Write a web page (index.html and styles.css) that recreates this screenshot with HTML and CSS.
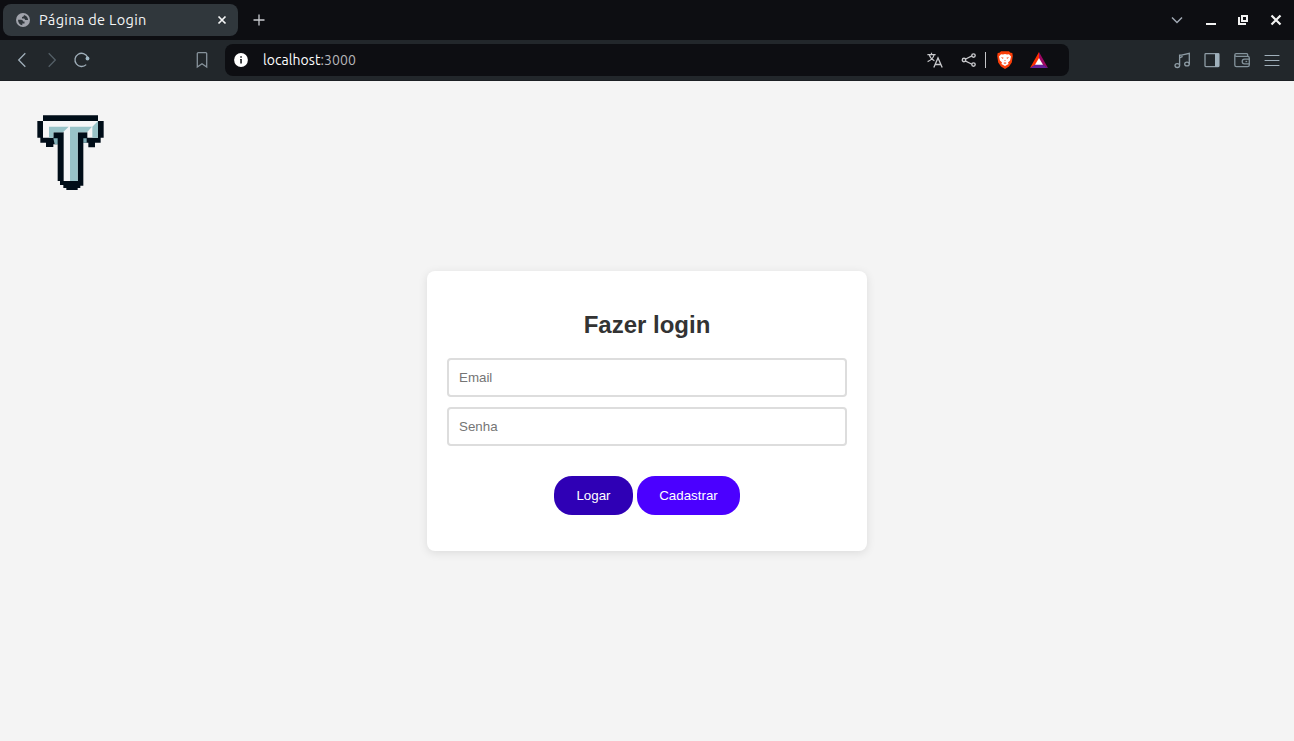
FILE: index.html
```html
<!DOCTYPE html>
<html lang="pt-BR">
<head>
<meta charset="utf-8">
<title>Página de Login</title>
<link rel="stylesheet" href="styles.css">
</head>
<body>
<header class="browser">
  <div class="tabbar">
    <div class="tab">
      <svg class="globe" width="14" height="14" viewBox="0 0 14 14"><circle cx="7" cy="7" r="7" fill="#a0a3ab"/><path d="M2 6.8h3.1c1.3 0 1.9.7 1.9 1.7h1.5v2H6.3v1.8C3.8 12 2 9.8 2 6.8zM8 2c-.1 1.4-.8 1.7-2 1.9v1.6h1.7c.8 0 1.1.7 1.5 1.6h2.9c-.1-2.6-1.7-4.6-4.1-5.1z" fill="#30373c"/></svg>
      <span class="tab-title">Página de Login</span>
      <svg class="tab-close" width="10" height="10" viewBox="0 0 10 10"><path d="M1.5 1.5l7 7M8.5 1.5l-7 7" stroke="#f4f5f6" stroke-width="1.7"/></svg>
    </div>
    <svg class="new-tab" width="12" height="12" viewBox="0 0 12 12"><path d="M6 .5v11M.5 6h11" stroke="#c9cbd0" stroke-width="1.3"/></svg>
    <div class="window-controls">
      <svg width="32" height="20" viewBox="0 0 32 20"><path d="M11 7.5l5 5 5-5" fill="none" stroke="#a0a8b3" stroke-width="1.5"/></svg>
      <svg width="34" height="20" viewBox="0 0 34 20"><path d="M13 13h10v2H13z" fill="#f2f2f2"/></svg>
      <svg width="32" height="20" viewBox="0 0 32 20"><path d="M14 5h7v7h-7zM16 7v3h3V7zM11 7h2v6h6v2h-8z" fill="#f2f2f2" fill-rule="evenodd"/></svg>
      <svg width="32" height="20" viewBox="0 0 32 20"><path d="M12.5 5.5l9 9M21.5 5.5l-9 9" stroke="#f2f2f2" stroke-width="2.2"/></svg>
    </div>
  </div>
  <div class="toolbar">
    <div class="icons">
      <svg width="30" height="20" viewBox="0 0 30 20"><path d="M18.3 3.3L11.7 10l6.6 6.7" fill="none" stroke="#a0afba" stroke-width="1.3"/></svg>
      <svg width="30" height="20" viewBox="0 0 30 20"><path d="M11.7 3.3l6.6 6.7-6.6 6.7" fill="none" stroke="#545f67" stroke-width="1.3"/></svg>
      <svg width="30" height="20" viewBox="0 0 30 20"><path d="M20.6 7.2A6.6 6.6 0 1 0 19.2 14.6" fill="none" stroke="#a0afba" stroke-width="1.3"/><circle cx="20.5" cy="8.5" r="1.9" fill="#a0b7c4"/></svg>
    </div>
    <svg class="bookmark" width="30" height="20" viewBox="0 0 30 20"><path d="M11.3 2.6h7.4q1 0 1 1v13.5L15 13.8l-4.7 3.3V3.6q0-1 1-1z" fill="none" stroke="#87929b" stroke-width="1.3"/></svg>
    <div class="omnibox">
      <svg class="info" width="14" height="14" viewBox="0 0 14 14"><circle cx="7" cy="7" r="6.9" fill="#fff"/><path d="M6.2 3.3h1.7v1.5H6.2zM6 6h1.9v4.6H6.2V7H6z" fill="#24272a"/></svg>
      <span class="url">localhost<span class="port">:3000</span></span>
      <div class="omni-actions">
        <svg width="18" height="20" viewBox="0 0 18 20"><path d="M1.4 4.6h8.2M5.5 2.7v1.9M3.2 4.7c.8 2.8 2.6 4.8 5.2 6.1M8.2 4.7C7.3 8 5 10.4 1.6 11.6" fill="none" stroke="#c8c9cc" stroke-width="1.2"/><path d="M7.8 17.5L12 7.9l4.2 9.6M9.2 14.5h5.6" fill="none" stroke="#c8c9cc" stroke-width="1.3"/></svg>
        <svg class="share" width="16" height="20" viewBox="0 0 16 20"><path d="M4.2 9.2l6.7-3.3M4.2 10.9l6.7 3.3" stroke="#c8c9cc" stroke-width="1.2"/><g fill="none" stroke="#c8c9cc" stroke-width="1.4"><circle cx="3" cy="10" r="1.7"/><circle cx="12.5" cy="5.6" r="1.7"/><circle cx="12.5" cy="14.6" r="1.7"/></g></svg>
        <i class="divider"></i>
        <svg class="brave" width="18" height="20" viewBox="0 0 18 20"><path d="M5 1.2h8l1.5 1.5 1.8.3.5 3-1 6.4L13 16.5 9 19l-4-2.5-2.8-4.1-1-6.4.5-3 1.8-.3z" fill="#fb3f09"/><path d="M5 4.2l2 .4L9 4l2 .6 2-.4 2 2.3-.9 4-2.1 2.1.6 1.4L9 16l-3.6-2 .6-1.4-2.1-2.1-.9-4z" fill="#fff"/><path d="M4.9 7.1l2.7.6-.8 1.4zM13.1 7.1l-2.7.6.8 1.4zM8.3 10h1.4L9 11.4zM7.3 13.1l1.7-.8 1.7.8-1.7 1z" fill="#fb5428"/></svg>
        <svg class="bat" width="18" height="20" viewBox="0 0 18 20"><path d="M9 2L0 18l9-5z" fill="#ff3000"/><path d="M9 2l9 16-9-5z" fill="#9e0763"/><path d="M0 18h18l-9-6z" fill="#662198"/><path d="M9 8l4 6.8H5z" fill="#fff"/></svg>
      </div>
    </div>
    <div class="icons right-icons">
      <svg width="30" height="20" viewBox="0 0 30 20"><g fill="none" stroke="#8f9da6" stroke-width="1.3"><path d="M12.6 15.2V5.2h1.9L22.3 3.4v10.5M12.6 8l3-1.6"/><ellipse cx="10.3" cy="15.6" rx="2.3" ry="1.9"/><ellipse cx="20" cy="14" rx="2.3" ry="1.9"/></g></svg>
      <svg width="30" height="20" viewBox="0 0 30 20"><rect x="8" y="3.6" width="14" height="13" rx=".8" fill="none" stroke="#8f9da6" stroke-width="1.3"/><path d="M18 3.5h4v13.3h-4z" fill="#a0b1bc"/></svg>
      <svg width="30" height="20" viewBox="0 0 30 20"><g fill="none" stroke="#84939c" stroke-width="1.3"><path d="M20.7 6.4V4.7q0-1.1-1.1-1.1H9.2q-1.4 0-1.4 1.4v10q0 1.6 1.6 1.6h11q1.9 0 1.9-1.7V8q0-1.6-1.7-1.6H9.4q-1.5 0-1.5-1.3"/><path d="M22.5 9.2h-5a2.3 2.3 0 0 0 0 4.6h5"/><path d="M18.5 11.5h1.7"/></g></svg>
      <svg width="30" height="20" viewBox="0 0 30 20"><path d="M8 5.5h14M8 10.5h14M8 15.5h14" stroke="#a0afba" stroke-width="1.1" stroke-linecap="round"/></svg>
    </div>
  </div>
</header>
<main class="page">
  <svg class="logo" width="82" height="90" viewBox="0 -1 246 270">
    <path d="M39 21h165v17h17v50h-9v15h-17v14h-20v-14h-15v129h-9v7h-8v6h-34v-6h-9v-9h-10v-12H83V108H70v8H48v-13H31V88h-9V38h17z" fill="#000d18"/>
    <path d="M39 38h165v50h-32V72h-29v146h-42V72H70v16H39z" fill="#f5f6f7"/>
    <path d="M57 55h59L99 72H70v16H57zM120 55h66l-15 17h-28v146h-23zM204 38v50h-17V55z" fill="#98c3c8"/>
    <path d="M70 90h13v18H74zM160 90h10v13h-10z" fill="#80aeb6"/>
  </svg>
  <form class="card">
    <h1>Fazer login</h1>
    <input type="email" placeholder="Email">
    <input type="password" placeholder="Senha">
    <div class="buttons">
      <button type="button" class="login">Logar</button>
      <button type="button" class="signup">Cadastrar</button>
    </div>
  </form>
</main>
</body>
</html>
```
FILE: styles.css
```css
* { box-sizing: border-box; }
body {
  margin: 0;
  height: 741px;
  overflow: hidden;
  display: flex;
  flex-direction: column;
  background: #f4f4f4;
  font-family: "Liberation Sans", Arial, sans-serif;
}
svg { display: block; flex: none; }
.browser { font-family: Ubuntu, "Noto Sans", sans-serif; font-size: 14px; }
.tabbar {
  height: 40px;
  display: flex;
  align-items: center;
  padding-left: 3px;
  background: #0d0e12;
}
.tab {
  width: 235px;
  height: 32px;
  display: flex;
  align-items: center;
  padding: 0 11px 0 13px;
  border-radius: 8px;
  background: #30373c;
  color: #f4f5f6;
}
.tab-title {
  margin-left: 9px;
  padding-bottom: 2px;
  font-size: 14.5px;
  letter-spacing: 0.33px;
  white-space: nowrap;
}
.tab-close { margin-left: auto; }
.new-tab { margin-left: 15px; }
.window-controls { display: flex; margin-left: auto; padding-right: 3px; }
.toolbar {
  height: 41px;
  display: flex;
  align-items: center;
  padding: 0 7px;
  background: #22272b;
  border-bottom: 1px solid #1b1f23;
}
.icons { display: flex; }
.bookmark { margin-left: 90px; }
.omnibox {
  width: 844px;
  height: 32px;
  margin-left: 8px;
  display: flex;
  align-items: center;
  padding: 0 21px 0 9px;
  border-radius: 8px;
  background: #0d0e12;
}
.url { margin-left: 15px; color: #fff; letter-spacing: 0.07px; }
.port { color: #b5b6b9; }
.omni-actions { display: flex; align-items: center; margin-left: auto; }
.share { margin-left: 17px; }
.divider { width: 1px; height: 16px; margin-left: 8px; background: #c4c5c8; }
.brave { margin-left: 10px; }
.bat { margin-left: 16px; }
.right-icons { margin-left: auto; }
.page { flex: 1; display: flex; flex-direction: column; align-items: center; }
.logo { align-self: flex-start; margin: 27px 0 0 30px; }
.card {
  width: 440px;
  height: 280px;
  margin-top: 73px;
  padding: 40px 20px 36px;
  display: flex;
  flex-direction: column;
  border-radius: 8px;
  background: #fff;
  box-shadow: 0 2px 10px rgba(0, 0, 0, 0.1);
}
h1 {
  margin: 0 0 20px;
  font-size: 24px;
  line-height: 27px;
  text-align: center;
  color: #333;
}
input {
  width: 100%;
  height: 39px;
  margin: 0 0 10px;
  padding: 10px;
  border: 2px solid #ddd;
  border-radius: 4px;
  font: 13.333px "Liberation Sans", Arial, sans-serif;
}
input::placeholder { color: #757575; }
.buttons { display: flex; justify-content: center; gap: 4px; margin-top: 20px; }
button {
  height: 39px;
  padding: 0;
  border: 0;
  border-radius: 18px;
  color: #fff;
  font: 13.333px "Liberation Sans", Arial, sans-serif;
}
.login { width: 79px; background: #2f00b5; }
.signup { width: 103px; background: #4b00ff; }
```
